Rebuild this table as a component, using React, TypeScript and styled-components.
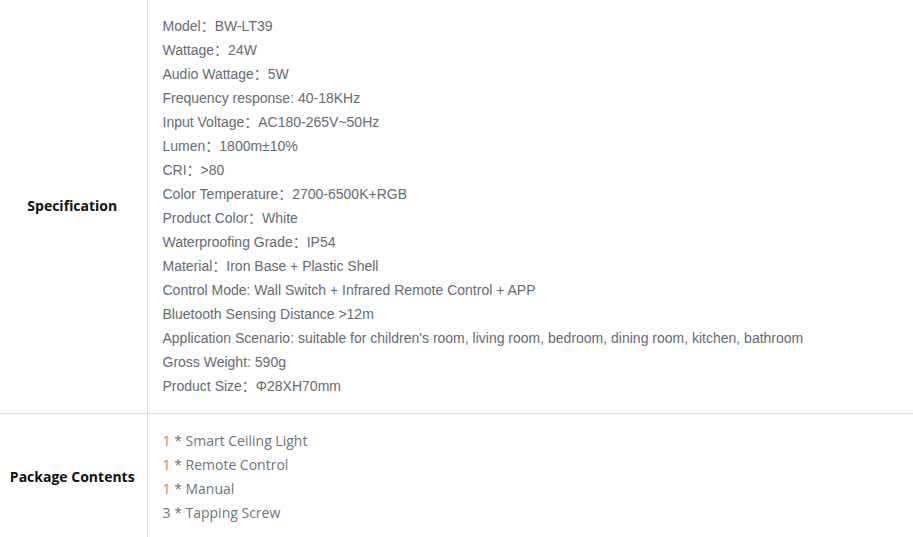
import React from 'react';
import styled, { createGlobalStyle } from 'styled-components';

const GlobalStyle = createGlobalStyle`
	body {
		margin: 0;
		background: #fff;
	}
`;

const specs: string[] = [
	'Model：BW-LT39',
	'Wattage：24W',
	'Audio Wattage：5W',
	'Frequency response: 40-18KHz',
	'Input Voltage：AC180-265V~50Hz',
	'Lumen：1800m±10%',
	'CRI：>80',
	'Color Temperature：2700-6500K+RGB',
	'Product Color：White',
	'Waterproofing Grade：IP54',
	'Material：Iron Base + Plastic Shell',
	'Control Mode: Wall Switch + Infrared Remote Control + APP',
	'Bluetooth Sensing Distance >12m',
	"Application Scenario: suitable for children's room, living room, bedroom, dining room, kitchen, bathroom",
	'Gross Weight: 590g',
	'Product Size：Φ28XH70mm',
];

interface PackageItem {
	qty: string;
	name: string;
	accent: boolean;
}

const contents: PackageItem[] = [
	{ qty: '1', name: 'Smart Ceiling Light', accent: true },
	{ qty: '1', name: 'Remote Control', accent: true },
	{ qty: '1', name: 'Manual', accent: true },
	{ qty: '3', name: 'Tapping Screw', accent: false },
];

const TableElement = styled.table`
	width: 100%;
	border-collapse: collapse;
`;

const TableRow = styled.tr<{ $last?: boolean }>`
	border-bottom: ${(p) => (p.$last ? 'none' : '1px solid #dddddd')};
`;

const LabelCell = styled.th`
	width: 147px;
	box-sizing: border-box;
	padding: 0 10px 2px 8px;
	border-right: 1px solid #dddddd;
	font-family: 'Open Sans', sans-serif;
	font-weight: 700;
	font-size: 14px;
	color: #111;
	text-align: center;
	vertical-align: middle;
`;

const ValueCell = styled.td<{ $top: number }>`
	padding: ${(p) => p.$top}px 15px 15px;
	vertical-align: top;
`;

const SpecLine = styled.p`
	margin: 0;
	font-family: 'Liberation Sans', Arial, 'Noto Sans CJK SC', sans-serif;
	font-size: 14px;
	line-height: 24px;
	color: #666a73;
	white-space: nowrap;
`;

const ContentLine = styled.p`
	margin: 0;
	font-family: 'Open Sans', sans-serif;
	font-size: 14px;
	line-height: 24px;
	color: #6f737b;
	white-space: nowrap;
`;

const Qty = styled.span<{ $accent: boolean }>`
	color: ${(p) => (p.$accent ? '#b8855e' : '#6f737b')};
`;

export default function App(): JSX.Element {
	return (
		<>
			<GlobalStyle />
			<TableElement>
				<tbody>
					<TableRow>
						<LabelCell>Specification</LabelCell>
						<ValueCell $top={14}>
							{specs.map((line) => (
								<SpecLine key={line}>{line}</SpecLine>
							))}
						</ValueCell>
					</TableRow>
					<TableRow $last>
						<LabelCell>Package Contents</LabelCell>
						<ValueCell $top={15}>
							{contents.map(({ qty, name, accent }) => (
								<ContentLine key={name}>
									<Qty $accent={accent}>{qty}</Qty> * {name}
								</ContentLine>
							))}
						</ValueCell>
					</TableRow>
				</tbody>
			</TableElement>
		</>
	);
}
